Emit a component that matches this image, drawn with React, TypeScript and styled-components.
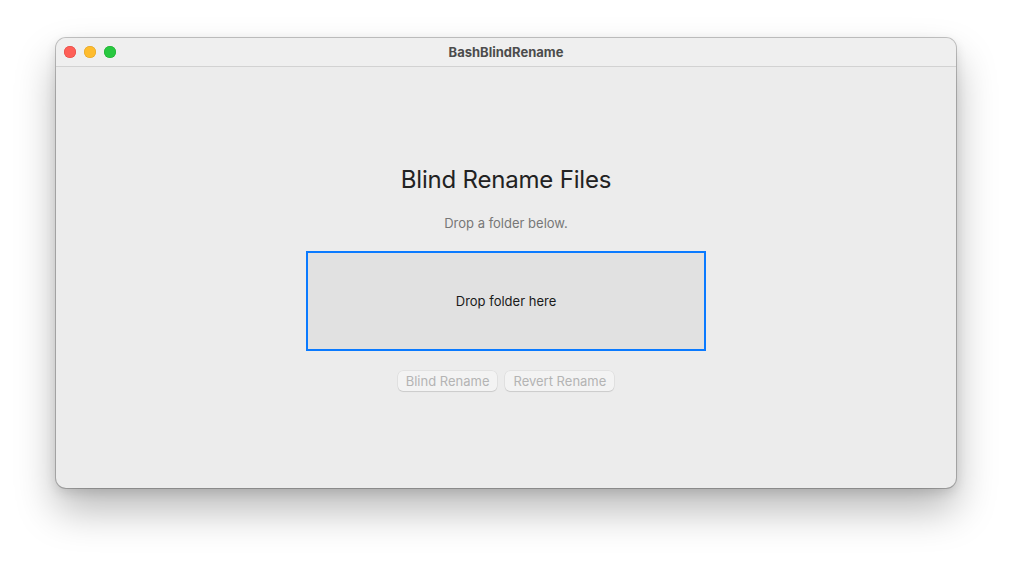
import styled, { createGlobalStyle } from 'styled-components'

const GlobalStyle = createGlobalStyle`
  html, body {
    margin: 0;
    padding: 0;
    background: #ffffff;
    font-family: Inter, "Noto Sans", "Liberation Sans", sans-serif;
    -webkit-font-smoothing: antialiased;
  }
`

const Page = styled.div`
  width: 1012px;
  height: 562px;
  box-sizing: border-box;
  padding: 38px 56px;
  overflow: hidden;
`

const Window = styled.div`
  width: 900px;
  height: 450px;
  border-radius: 10px;
  background: #ececec;
  box-shadow: 0 0 0 1px rgba(0, 0, 0, 0.22), 0 22px 40px rgba(0, 0, 0, 0.28),
    0 4px 12px rgba(0, 0, 0, 0.12);
  display: flex;
  flex-direction: column;
  overflow: hidden;
`

const TitleBar = styled.div`
  height: 28px;
  flex-shrink: 0;
  background: #efefef;
  border-bottom: 1px solid #d2d2d2;
  display: flex;
  align-items: center;
  position: relative;
  padding: 0 8px;
`

const Lights = styled.div`
  display: flex;
  gap: 8px;
`

const Light = styled.span<{ $color: string; $edge: string }>`
  width: 12px;
  height: 12px;
  border-radius: 50%;
  background: ${(p) => p.$color};
  box-shadow: inset 0 0 0 0.5px ${(p) => p.$edge};
`

const Title = styled.div`
  position: absolute;
  left: 0;
  right: 0;
  text-align: center;
  font-size: 13px;
  font-weight: 700;
  color: #4c4c4c;
  pointer-events: none;
`

const Content = styled.div`
  flex: 1;
  display: flex;
  flex-direction: column;
  align-items: center;
  padding-top: 99px;
`

const Heading = styled.h1`
  margin: 0;
  font-size: 24px;
  line-height: 28px;
  font-weight: 400;
  letter-spacing: -0.2px;
  color: #222222;
`

const Subtitle = styled.p`
  margin: 21px 0 0;
  font-size: 13px;
  line-height: 16px;
  color: #777777;
`

const DropZone = styled.div`
  margin-top: 20px;
  width: 400px;
  height: 100px;
  box-sizing: border-box;
  border: 2px solid #0a7aff;
  background: #e1e1e1;
  display: flex;
  align-items: center;
  justify-content: center;
  font-size: 13px;
  color: #1a1a1a;
`

const Actions = styled.div`
  margin-top: 20px;
  display: flex;
  gap: 8px;
`

const Button = styled.button`
  height: 20px;
  padding: 0 8px;
  border: none;
  border-radius: 5px;
  background: #f3f3f3;
  box-shadow: 0 0 0 0.5px rgba(0, 0, 0, 0.08), 0 1px 1px rgba(0, 0, 0, 0.1);
  font-family: inherit;
  font-size: 13px;
  color: #b4b4b4;
  cursor: default;
`

export default function App() {
  return (
    <>
      <GlobalStyle />
      <Page>
        <Window>
          <TitleBar>
            <Lights>
              <Light $color="#fe5f57" $edge="#e0443e" />
              <Light $color="#febc2e" $edge="#dea123" />
              <Light $color="#28c840" $edge="#1aab29" />
            </Lights>
            <Title>BashBlindRename</Title>
          </TitleBar>
          <Content>
            <Heading>Blind Rename Files</Heading>
            <Subtitle>Drop a folder below.</Subtitle>
            <DropZone>Drop folder here</DropZone>
            <Actions>
              <Button disabled>Blind Rename</Button>
              <Button disabled>Revert Rename</Button>
            </Actions>
          </Content>
        </Window>
      </Page>
    </>
  )
}
